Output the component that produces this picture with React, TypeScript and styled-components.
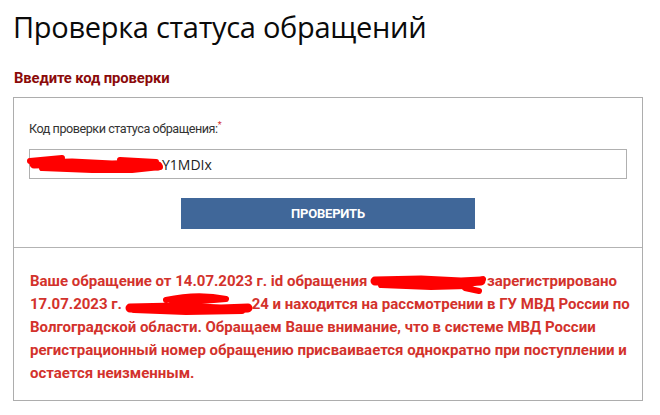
import React from 'react';
import styled, { createGlobalStyle } from 'styled-components';

const GlobalStyle = createGlobalStyle`
	body {
		margin: 0;
		background: #fff;
	}
`;

const Page = styled.div`
	padding: 8px 13px 0;
	width: 630px;
	font-family: Roboto, 'Liberation Sans', sans-serif;
`;

const Title = styled.h1`
	margin: 0;
	font-family: 'Open Sans', sans-serif;
	font-size: 29px;
	font-weight: 400;
	line-height: 38px;
	color: #0a0a0a;
	letter-spacing: -0.3px;
`;

const Subtitle = styled.h2`
	margin: 22px 1px 9px;
	font-family: Roboto, sans-serif;
	font-size: 14.8px;
	font-weight: 700;
	line-height: 20px;
	color: #8b0a0a;
	letter-spacing: -0.1px;
`;

const Panel = styled.div`
	border: 1px solid #adadad;
	box-sizing: border-box;
	width: 630px;
`;

const FormSection = styled.div`
	padding: 20px 15px 18px;
	border-bottom: 1px solid #b3b3b3;
	display: flex;
	flex-direction: column;
`;

const Label = styled.label`
	font-size: 12.6px;
	color: #333;
	line-height: 22px;
	letter-spacing: -0.45px;
	margin-bottom: 9px;

	sup {
		color: #d32f2f;
		font-size: 9px;
		vertical-align: top;
		line-height: 14px;
	}
`;

const Field = styled.div`
	height: 30px;
	border: 1px solid #b0b0b0;
	box-sizing: border-box;
	display: flex;
	align-items: center;
	padding-left: 2px;
	font-family: 'Open Sans', sans-serif;
	font-size: 14px;
	color: #222;
`;

const Button = styled.button`
	align-self: center;
	margin-top: 19px;
	width: 294px;
	height: 31px;
	border: none;
	background: #406799;
	color: #fff;
	font-family: Roboto, sans-serif;
	font-weight: 700;
	font-size: 13px;
	letter-spacing: -0.2px;
	cursor: pointer;
`;

const Message = styled.p`
	margin: 0;
	padding: 22px 10px 15px 16px;
	font-size: 15px;
	font-weight: 700;
	line-height: 23px;
	color: #d3322c;
	white-space: nowrap;
`;

const ScribbleBox = styled.span<{ $w: number; $h: number }>`
	display: inline-block;
	width: ${p => p.$w}px;
	height: ${p => p.$h}px;
	vertical-align: middle;
	position: relative;

	svg {
		position: absolute;
		left: 0;
		top: 0;
		overflow: visible;
	}
`;

const Scribble = ({ w, h, paths }: { w: number; h: number; paths: string[] }) => (
	<ScribbleBox $w={w} $h={h}>
		<svg width={w} height={h} viewBox={`0 0 ${w} ${h}`}>
			{paths.map((d, i) => (
				<path key={i} d={d} fill="none" stroke="#ff0000" strokeWidth={i === 0 ? 9 : 6} strokeLinecap="round" strokeLinejoin="round" />
			))}
		</svg>
	</ScribbleBox>
);

const App = () => (
	<Page>
		<GlobalStyle />
		<Title>Проверка статуса обращений</Title>
		<Subtitle>Введите код проверки</Subtitle>
		<Panel>
			<FormSection>
				<Label>
					Код проверки статуса обращения:<sup>*</sup>
				</Label>
				<Field>
					<Scribble
						w={130}
						h={14}
						paths={['M2 7 L40 6 L80 8 L112 7 L126 9', 'M10 11 L60 13 L100 13 L128 10', 'M-2 4 L30 1 M88 3 L124 5']}
					/>
					Y1MDIx
				</Field>
				<Button>ПРОВЕРИТЬ</Button>
			</FormSection>
			<Message>
				Ваше обращение от 14.07.2023 г. id обращения{' '}
				<Scribble w={116} h={16} paths={['M4 7 L50 6 L90 8 L110 7', 'M10 11 L60 13 L96 12 L112 5', 'M94 14 L108 17']} />
				зарегистрировано
				<br />
				17.07.2023 г.{' '}
				<Scribble w={126} h={16} paths={['M4 11 L50 10 L95 12 L122 11', 'M40 3 Q72 -4 100 2 Q72 4 46 7', 'M8 13 L60 15 L116 14']} />
				24 и находится на рассмотрении в ГУ МВД России по
				<br />
				Волгоградской области. Обращаем Ваше внимание, что в системе МВД России
				<br />
				регистрационный номер обращению присваивается однократно при поступлении и
				<br />
				остается неизменным.
			</Message>
		</Panel>
	</Page>
);

export default App;
